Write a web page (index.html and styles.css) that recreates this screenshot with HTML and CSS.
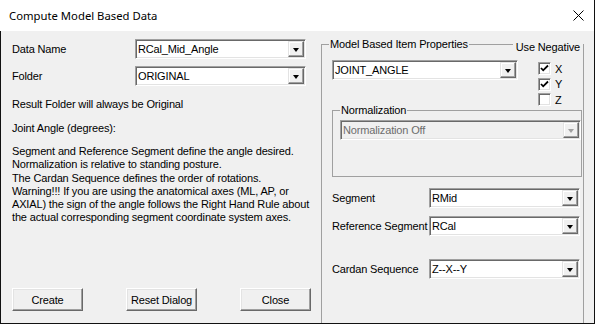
FILE: index.html
```html
<!DOCTYPE html>
<html lang="en">
<head>
    <meta charset="UTF-8">
    <meta name="viewport" content="width=device-width, initial-scale=1.0">
    <title>Compute Model Based Data</title>
    <link rel="stylesheet" href="styles.css">
</head>
<body>
    <div class="window">
        <div class="titlebar">
            <span class="title">Compute Model Based Data</span>
            <svg class="close" width="11" height="11" viewBox="0 0 11 11">
                <path d="M0.5 0.5 L10.5 10.5 M10.5 0.5 L0.5 10.5" stroke="#000" stroke-width="1" fill="none"/>
            </svg>
        </div>
        <div class="content">
            <div class="left">
                <div class="field-row">
                    <span class="label">Data Name</span>
                    <div class="combo data-combo">
                        <span class="combo-text">RCal_Mid_Angle</span>
                        <span class="combo-btn"><span class="arrow"></span></span>
                    </div>
                </div>
                <div class="field-row">
                    <span class="label">Folder</span>
                    <div class="combo data-combo">
                        <span class="combo-text">ORIGINAL</span>
                        <span class="combo-btn"><span class="arrow"></span></span>
                    </div>
                </div>
                <p class="note note-first">Result Folder will always be Original</p>
                <p class="note note-second">Joint Angle (degrees):</p>
                <p class="note desc">Segment and Reference Segment define the angle desired.<br>Normalization is relative to standing posture.<br>The Cardan Sequence defines the order of rotations.<br>Warning!!! If you are using the anatomical axes (ML, AP, or<br>AXIAL) the sign of the angle follows the Right Hand Rule about<br>the actual corresponding segment coordinate system axes.</p>
                <div class="buttons">
                    <button class="btn">Create</button>
                    <button class="btn">Reset Dialog</button>
                    <button class="btn">Close</button>
                </div>
            </div>
            <div class="right">
                <fieldset class="group main-group">
                    <legend>Model Based Item Properties</legend>
                    <div class="group-body main-body">
                        <span class="use-negative">Use Negative</span>
                        <div class="joint-row">
                            <div class="combo joint-combo">
                                <span class="combo-text">JOINT_ANGLE</span>
                                <span class="combo-btn"><span class="arrow"></span></span>
                            </div>
                            <div class="checks">
                                <div class="check">
                                    <span class="box"><svg width="9" height="9" viewBox="0 0 9 9"><path d="M1 4 L3.2 6.3 L8 1.5" stroke="#000" stroke-width="1.8" fill="none"/></svg></span>
                                    <span>X</span>
                                </div>
                                <div class="check">
                                    <span class="box"><svg width="9" height="9" viewBox="0 0 9 9"><path d="M1 4 L3.2 6.3 L8 1.5" stroke="#000" stroke-width="1.8" fill="none"/></svg></span>
                                    <span>Y</span>
                                </div>
                                <div class="check">
                                    <span class="box"></span>
                                    <span>Z</span>
                                </div>
                            </div>
                        </div>
                        <fieldset class="group norm-group">
                            <legend>Normalization</legend>
                            <div class="group-body norm-body">
                                <div class="combo disabled">
                                    <span class="combo-text">Normalization Off</span>
                                    <span class="combo-btn"><span class="arrow"></span></span>
                                </div>
                            </div>
                        </fieldset>
                        <div class="seg-row seg-first">
                            <span class="seg-label">Segment</span>
                            <div class="combo seg-combo">
                                <span class="combo-text">RMid</span>
                                <span class="combo-btn"><span class="arrow"></span></span>
                            </div>
                        </div>
                        <div class="seg-row seg-ref">
                            <span class="seg-label">Reference Segment</span>
                            <div class="combo seg-combo">
                                <span class="combo-text">RCal</span>
                                <span class="combo-btn"><span class="arrow"></span></span>
                            </div>
                        </div>
                        <div class="seg-row seg-cardan">
                            <span class="seg-label">Cardan Sequence</span>
                            <div class="combo seg-combo">
                                <span class="combo-text">Z--X--Y</span>
                                <span class="combo-btn"><span class="arrow"></span></span>
                            </div>
                        </div>
                    </div>
                </fieldset>
            </div>
        </div>
    </div>
</body>
</html>
```

FILE: styles.css
```css
body {
    margin: 0;
    font-family: "Liberation Sans", Arial, sans-serif;
    font-size: 11px;
    letter-spacing: -0.15px;
    color: #000;
    background: #fff;
}
.window {
    width: 595px;
    height: 324px;
    box-sizing: border-box;
    border-right: 1px solid #111;
    border-bottom: 1px solid #111;
    background: #f0f0f0;
    display: flex;
    flex-direction: column;
    overflow: hidden;
}
.titlebar {
    flex: none;
    height: 31px;
    background: #fff;
    display: flex;
    align-items: center;
    justify-content: space-between;
    padding: 0 10px 0 9px;
}
.title {
    font-family: "Noto Sans", sans-serif;
    font-size: 11.3px;
    letter-spacing: 0;
}
.close {
    display: block;
}
.content {
    flex: 1;
    min-height: 0;
    display: flex;
    border-left: 1px solid #111;
}
.left {
    width: 320px;
    box-sizing: border-box;
    padding: 8px 0 12px 11px;
    display: flex;
    flex-direction: column;
}
.field-row {
    display: flex;
    align-items: center;
}
.field-row + .field-row {
    margin-top: 7px;
}
.label {
    width: 123px;
}
.combo {
    height: 20px;
    box-sizing: border-box;
    display: flex;
    background: #fff;
    border: 1px solid;
    border-color: #a0a0a0 #fff #fff #a0a0a0;
    box-shadow: inset 1px 1px 0 #696969, inset -1px -1px 0 #e3e3e3;
}
.combo-text {
    flex: 1;
    padding-left: 2px;
    line-height: 18px;
    white-space: nowrap;
    overflow: hidden;
}
.combo-btn {
    width: 16px;
    margin: 1px 1px 1px 0;
    box-sizing: border-box;
    background: #f0f0f0;
    border: 1px solid;
    border-color: #e3e3e3 #696969 #696969 #e3e3e3;
    box-shadow: inset -1px -1px 0 #a0a0a0, inset 1px 1px 0 #fff;
    display: flex;
    align-items: center;
    justify-content: center;
}
.arrow {
    width: 0;
    height: 0;
    margin-top: 1px;
    border-left: 3.5px solid transparent;
    border-right: 3.5px solid transparent;
    border-top: 4px solid #000;
}
.combo.disabled {
    background: #f0f0f0;
    color: #6d6d6d;
}
.combo.disabled .arrow {
    border-top-color: #a0a0a0;
}
.data-combo {
    width: 171px;
}
.note {
    margin: 0;
    line-height: 13px;
    white-space: nowrap;
}
.note-first {
    margin-top: 12px;
}
.note-second {
    margin-top: 11px;
}
.desc {
    margin-top: 10px;
    line-height: 13.3px;
}
.buttons {
    margin-top: auto;
    display: flex;
    gap: 43px;
}
.btn {
    width: 71px;
    height: 23px;
    padding: 0;
    font: inherit;
    letter-spacing: inherit;
    color: #000;
    background: #f0f0f0;
    border: 1px solid;
    border-color: #fff #696969 #696969 #fff;
    box-shadow: inset -1px -1px 0 #a0a0a0, inset 1px 1px 0 #e3e3e3;
}
.right {
    width: 263px;
}
.group {
    margin: 0;
    padding: 0;
    min-width: 0;
    border: 1px solid #a0a0a0;
}
.group legend {
    margin-left: 7px;
    padding: 0 1px;
    line-height: 13px;
}
.main-group {
    margin-top: 7px;
    height: 360px;
}
.main-body {
    position: relative;
    padding: 9px 1px 0 10px;
}
.use-negative {
    position: absolute;
    top: -10px;
    right: 0;
    padding: 0 3px 0 3px;
    line-height: 13px;
    background: #f0f0f0;
}
.joint-row {
    display: flex;
    align-items: flex-start;
    height: 44px;
}
.joint-combo {
    width: 186px;
}
.checks {
    margin: 2px 0 0 20px;
    display: flex;
    flex-direction: column;
    gap: 2.5px;
}
.check {
    display: flex;
    align-items: center;
    gap: 4px;
    height: 13px;
}
.box {
    width: 13px;
    height: 13px;
    box-sizing: border-box;
    background: #fff;
    border: 1px solid;
    border-color: #a0a0a0 #fff #fff #a0a0a0;
    box-shadow: inset 1px 1px 0 #696969, inset -1px -1px 0 #e3e3e3;
    display: flex;
    align-items: center;
    justify-content: center;
}
.box svg {
    display: block;
}
.norm-body {
    padding: 3px 0 36px 7px;
}
.seg-row {
    display: flex;
    align-items: center;
}
.seg-first {
    margin-top: 11px;
}
.seg-ref {
    margin-top: 8px;
}
.seg-cardan {
    margin-top: 23px;
}
.seg-label {
    width: 97px;
    white-space: nowrap;
}
.seg-combo {
    width: 151px;
}
```
